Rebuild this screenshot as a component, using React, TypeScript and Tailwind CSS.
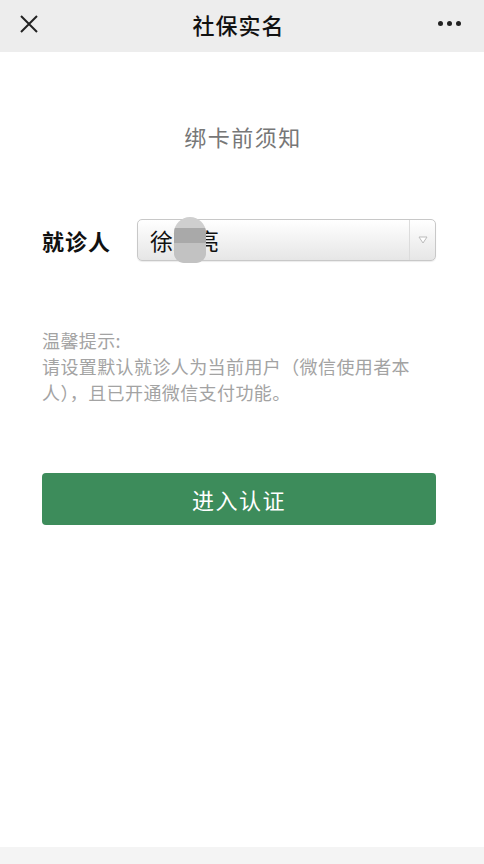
const App = () => {
  return (
    <div
      className="w-[484px] h-[864px] bg-white flex flex-col text-[#222]"
      style={{ fontFamily: '"Noto Sans CJK SC", "Noto Sans", sans-serif' }}
    >
      {/* top bar */}
      <div className="h-[52px] bg-[#ededed] flex items-center justify-between px-[19px] shrink-0">
        <svg width="20" height="20" viewBox="0 0 20 20" className="-mt-[4px]">
          <path d="M2 2 L18 18 M18 2 L2 18" stroke="#222" strokeWidth="2" fill="none" />
        </svg>
        <div className="text-[22px] font-medium text-[#111] -mt-[4px] tracking-[1px]">社保实名</div>
        <div className="flex gap-[4px] -mt-[6px] pr-[4px]">
          <span className="w-[5px] h-[5px] rounded-full bg-[#222]" />
          <span className="w-[5px] h-[5px] rounded-full bg-[#222]" />
          <span className="w-[5px] h-[5px] rounded-full bg-[#222]" />
        </div>
      </div>

      <div className="flex-1 flex flex-col pl-[42px] pr-[48px]">
        <div className="text-center text-[22px] text-[#777] mt-[68px] leading-[32px] tracking-[1.5px] pl-[8px]">
          绑卡前须知
        </div>

        {/* patient select */}
        <div className="flex items-center mt-[67px]">
          <div className="w-[95px] text-[22px] font-bold text-[#111] tracking-[1px]">就诊人</div>
          <div className="relative flex-1 h-[42px] rounded-[5px] border border-[#c8c8c8] bg-gradient-to-b from-[#ffffff] to-[#e6e6e6] flex items-center shadow-[0_1px_1px_rgba(0,0,0,0.08)]">
            <div className="flex-1 pl-[12px] text-[23px] text-[#111] leading-none">徐某亮</div>
            <div className="w-[26px] h-full border-l border-[#dcdcdc] flex items-center justify-center">
              <svg width="10" height="8" viewBox="0 0 10 8">
                <path d="M1 1 L9 1 L5 7 Z" fill="#fff" stroke="#bbb" strokeWidth="1" />
              </svg>
            </div>
            <div className="absolute left-[36px] -top-[3px] w-[32px] h-[46px] rounded-t-[16px] rounded-b-[10px] bg-[#cfcfcf] overflow-hidden">
              <div className="mt-[11px] h-[15px] bg-[#a9a9a9]" />
              <div className="h-[20px] bg-[#c2c2c2]" />
            </div>
          </div>
        </div>

        {/* tips */}
        <div className="mt-[66px] text-[18px] leading-[26px] text-[#a3a3a3] tracking-[0.4px]">
          <div>温馨提示:</div>
          <div>请设置默认就诊人为当前用户（微信使用者本人），且已开通微信支付功能。</div>
        </div>

        <button className="mt-[68px] h-[52px] w-full rounded-[4px] bg-[#3d8c5b] text-white text-[22px] tracking-[1.5px]">
          进入认证
        </button>
      </div>

      <div className="h-[17px] bg-[#f4f4f4] shrink-0" />
    </div>
  );
};

export default App;
